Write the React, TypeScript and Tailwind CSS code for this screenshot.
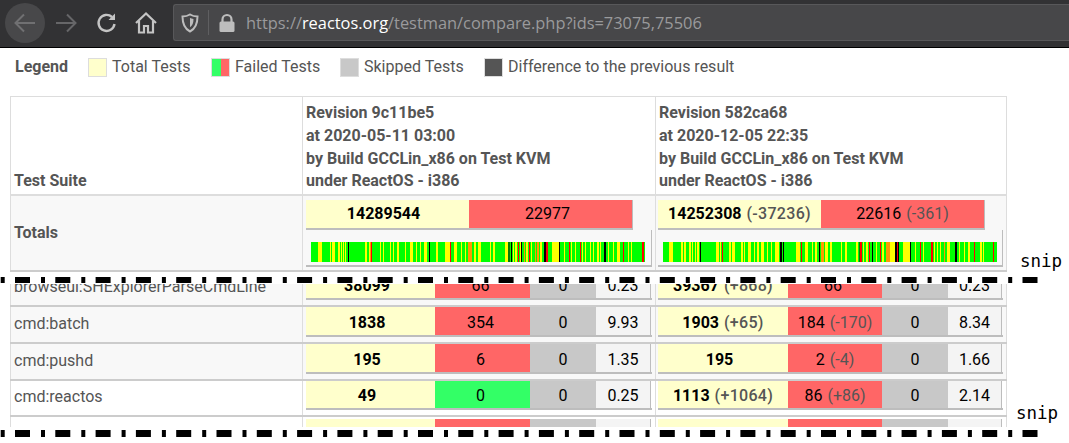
const Y = "#ffff00";
const R = "#ff0000";
const K = "#000000";
const O = "#ff9900";
const D = "#008000";

// [start, end, colour] in thirds of a pixel, measured from the start of the bar
type Stripe = [number, number, string];

const toStripes = (list: [number, number, string][], offset: number): Stripe[] =>
  list.map(([a, b, c]) => [a + offset, b + offset, c]);

const bar1: Stripe[] = [
  ...toStripes(
    [
      [30, 42, Y], [65, 70, Y], [73, 80, Y], [91, 96, Y], [99, 102, Y], [105, 108, Y], [112, 115, Y],
      [120, 123, K], [172, 178, Y], [182, 185, Y], [187, 190, O], [190, 193, R], [217, 220, Y],
      [225, 228, Y], [247, 250, Y], [256, 259, Y], [268, 274, Y], [292, 295, Y], [307, 316, Y],
      [325, 328, Y], [337, 340, Y], [349, 358, Y], [363, 366, K], [384, 390, Y], [412, 426, Y],
      [426, 429, R], [438, 447, Y], [459, 462, Y], [471, 474, Y], [480, 492, O], [498, 504, Y],
    ],
    -9,
  ),
  ...toStripes(
    [
      [0, 10, Y], [37, 40, Y], [46, 52, Y], [82, 90, Y], [91, 95, D], [99, 102, K], [104, 107, Y],
      [112, 118, Y], [121, 124, R], [127, 129, Y], [129, 132, K], [139, 142, O], [145, 151, Y],
      [154, 156, R], [160, 163, Y], [170, 175, O], [178, 184, O], [185, 193, Y], [198, 203, K],
      [203, 209, R], [222, 243, Y], [243, 246, K], [259, 262, Y], [272, 275, R], [280, 283, Y],
      [290, 295, Y], [306, 309, R], [312, 316, Y], [322, 325, Y], [335, 338, Y], [344, 347, Y],
      [356, 362, Y], [365, 370, Y], [378, 384, K], [389, 392, Y], [404, 407, Y], [416, 425, Y],
      [435, 438, R], [450, 453, Y], [459, 462, Y], [492, 498, R],
    ],
    501,
  ),
];

const bar2: Stripe[] = [
  ...toStripes(
    [
      [27, 39, Y], [62, 68, Y], [73, 79, Y], [88, 92, Y], [96, 100, Y], [105, 108, Y], [112, 116, Y],
      [120, 123, K], [169, 176, Y], [180, 184, Y], [185, 190, R], [208, 212, Y], [217, 224, Y],
      [244, 248, Y], [252, 256, Y], [265, 272, Y], [281, 284, Y], [292, 296, Y], [304, 313, Y],
      [322, 325, Y], [334, 337, Y], [346, 356, Y], [360, 365, K], [368, 372, K], [408, 420, Y],
      [423, 426, R], [436, 443, Y], [455, 458, Y], [466, 470, Y], [477, 480, K], [482, 492, O],
      [495, 504, Y],
    ],
    -9,
  ),
  ...toStripes(
    [
      [0, 6, Y], [33, 36, Y], [45, 50, Y], [78, 85, Y], [86, 90, D], [90, 96, R], [100, 102, Y],
      [108, 114, Y], [117, 120, R], [126, 129, K], [138, 141, Y], [150, 153, R], [156, 162, Y],
      [168, 180, O], [180, 195, Y], [195, 200, K], [200, 204, R], [204, 207, K], [218, 240, Y],
      [240, 243, K], [255, 258, Y], [270, 273, R], [279, 282, Y], [303, 310, R], [312, 315, Y],
      [321, 324, Y], [330, 333, Y], [342, 345, O], [351, 360, Y], [375, 381, K], [387, 390, Y],
      [402, 405, Y], [415, 420, Y], [432, 435, R], [450, 456, Y], [459, 462, Y], [489, 492, R],
    ],
    501,
  ),
];

const ResultBar = ({ stripes }: { stripes: Stripe[] }) => (
  <svg viewBox="0 0 1002 60" preserveAspectRatio="none" shapeRendering="crispEdges" className="block w-[334px] h-[20px]">
    <rect width="1002" height="60" fill="#00ff00" />
    {stripes.map(([a, b, c]) => (
      <rect key={a} x={a} y="0" width={b - a} height="60" fill={c} />
    ))}
  </svg>
);

const Diff = ({ children, strong }: { children: string; strong?: boolean }) => (
  <span className={`ml-[5px] text-[#555555] ${strong ? "font-medium tracking-[0.3px]" : "font-normal"}`}>{children}</span>
);

type Result = {
  total: string;
  totalDiff?: string;
  failed: string;
  failedDiff?: string;
  green?: boolean;
  skipped: string;
  time: string;
};

const ResultCells = ({ r, second }: { r: Result; second?: boolean }) => (
  <div className="flex h-[30px] border-b-2 border-[#bdbdbd] text-black">
    <div
      className={`${second ? "w-[130px]" : "w-[129px]"} ${r.totalDiff ? "" : "pr-[7px]"} flex items-center justify-center pt-[3px] bg-[#ffffcc] font-bold`}
    >
      {r.total}
      {r.totalDiff && <Diff strong>{r.totalDiff}</Diff>}
    </div>
    <div
      className={`${second ? "w-[94px]" : "w-[95px]"} ${r.green ? "bg-[#33ff66]" : "bg-[#ff6666]"} ${r.failedDiff ? "" : "pr-[4px]"} flex items-center justify-center pt-[3px]`}
    >
      {r.failed}
      {r.failedDiff && <Diff>{r.failedDiff}</Diff>}
    </div>
    <div className="w-[66px] flex items-center justify-center pt-[3px] bg-[#c8c8c8]">{r.skipped}</div>
    <div
      className={`${second ? "w-[54px]" : "w-[55px]"} flex items-center justify-center pt-[3px] bg-[#f4f4f4] border-r border-[#bdbdbd]`}
    >
      {r.time}
    </div>
  </div>
);

const Row = ({
  name,
  a,
  b,
  height,
  white,
  noBorder,
}: {
  name: string;
  a: Result;
  b: Result;
  height: string;
  white?: boolean;
  noBorder?: boolean;
}) => (
  <div
    className={`${height} ${white ? "bg-white" : "bg-[#f8f8f8]"} ${noBorder ? "items-start" : "items-end border-b-2 border-[#cccccc]"} ml-[10px] w-[997px] overflow-hidden flex`}
  >
    <div className="h-[37px] shrink-0 w-full grid grid-cols-[293px_353px_351px]">
      <div className="border-l border-r border-[#dddddd] pl-[3px] flex items-center text-[#555555]">{name}</div>
      <div className="border-r border-[#dddddd] pl-[3px] pr-[3px] pt-[2px]">
        <ResultCells r={a} />
      </div>
      <div className="border-r border-[#dddddd] pl-[2px] pr-[3px] pt-[2px]">
        <ResultCells r={b} second />
      </div>
    </div>
  </div>
);

const SnipLine = ({ className }: { className: string }) => (
  <svg className={`block w-[1069px] ${className}`} viewBox="0 0 1069 8" preserveAspectRatio="none">
    <line x1="-25.3" y1="4" x2="1037.5" y2="4" stroke="#000000" strokeWidth="8" strokeDasharray="15 11 4 10.3" />
  </svg>
);

const Swatch = ({ children }: { children?: React.ReactNode }) => (
  <div className="w-[19px] h-[19px] border border-[#dddddd] flex">{children}</div>
);

const Toolbar = () => (
  <div className="h-[48px] bg-[#323234] border-b border-black flex items-center pl-[5px] pb-[2px]">
    <div className="w-[40px] h-[40px] rounded-full bg-[#48484a] flex items-center justify-center">
      <svg width="24" height="24" viewBox="0 0 24 24" fill="none" stroke="#707072" strokeWidth="2">
        <path d="M22 12H3M11 3.500 2.500 12l8.500 8.500" />
      </svg>
    </div>
    <svg className="ml-[9px]" width="24" height="24" viewBox="0 0 24 24" fill="none" stroke="#666668" strokeWidth="2">
      <path d="M2 12h19M13 3.500 21.500 12 13 20.500" />
    </svg>
    <svg className="ml-[17px]" width="24" height="24" viewBox="0 0 24 24" fill="none" stroke="#c4c4c4" strokeWidth="2.400">
      <path d="M19.500 13a8 8 0 1 1-2.500-7" />
      <path d="M20 2.500V9h-6.500" fill="#c4c4c4" stroke="none" />
    </svg>
    <svg className="ml-[15px]" width="24" height="24" viewBox="0 0 24 24" fill="none" stroke="#c4c4c4" strokeWidth="2.200">
      <path d="M2 12 12 2.500 22 12" />
      <path d="M5 10v11.500h5V15h4v6.500h5V10" />
    </svg>
    <div className="ml-[15px] flex-1 h-[37px] bg-[#474749] border border-[#58585a] rounded-l-[3px] border-r-0 flex items-center pl-[7px]">
      <svg width="18" height="20" viewBox="0 0 18 20">
        <path d="M9 1.500c2.500 1.500 5 2 7.500 2 0 7-1.500 12-7.500 15-6-3-7.500-8-7.500-15 2.500 0 5-.5 7.500-2z" fill="none" stroke="#bdbdbd" strokeWidth="2" />
        <path d="M9 5c1 .5 2 .8 3.500 1 0 4-1 6.500-3.500 8.200z" fill="#bdbdbd" />
      </svg>
      <div className="ml-[9px] w-px h-[25px] bg-[#5f5f61]" />
      <svg className="ml-[9px]" width="18" height="20" viewBox="0 0 18 20">
        <path d="M4.500 9V6.500a4.500 4.500 0 0 1 9 0V9" fill="none" stroke="#bdbdbd" strokeWidth="2.200" />
        <rect x="1.500" y="8.500" width="15" height="10.500" rx="1.500" fill="#bdbdbd" />
      </svg>
      <div className="ml-[10px] pt-[2px] text-[16.4px] text-[#9a9a9c] font-['Open_Sans','Noto_Sans',sans-serif] whitespace-nowrap">
        https://<span className="text-white">reactos.org</span>/testman/compare.php?ids=73075,75506
      </div>
    </div>
  </div>
);

const Legend = () => (
  <div className="h-[48px] flex items-center pl-[15px] pb-[12px] pt-[2px] text-[#555555]">
    <div className="font-bold w-[73px]">Legend</div>
    <Swatch>
      <div className="flex-1 bg-[#ffffcc]" />
    </Swatch>
    <div className="ml-[5px] w-[99px]">Total Tests</div>
    <Swatch>
      <div className="flex-1 bg-[#33ff66]" />
      <div className="flex-1 bg-[#ff6666]" />
    </Swatch>
    <div className="ml-[5px] w-[105px]">Failed Tests</div>
    <Swatch>
      <div className="flex-1 bg-[#c8c8c8]" />
    </Swatch>
    <div className="ml-[5px] w-[120px]">Skipped Tests</div>
    <Swatch>
      <div className="flex-1 bg-[#555555]" />
    </Swatch>
    <div className="ml-[5px]">Difference to the previous result</div>
  </div>
);

const RevisionHeader = ({ hash, date }: { hash: string; date: string }) => (
  <div className="border-r border-[#dddddd] pl-[3px] pb-[1px] flex flex-col justify-end font-bold leading-[22.7px]">
    <div>Revision {hash}</div>
    <div>at {date}</div>
    <div>by Build GCCLin_x86 on Test KVM</div>
    <div>under ReactOS - i386</div>
  </div>
);

const Totals = ({ total, diff, failed, failedDiff, stripes, second }: {
  total: string;
  diff?: string;
  failed: string;
  failedDiff?: string;
  stripes: Stripe[];
  second?: boolean;
}) => (
  <div className={`border-r border-[#dddddd] pt-[4px] ${second ? "pl-[2px] pr-[3px]" : "pl-[3px] pr-[3px]"}`}>
    <div className="flex h-[30px] w-[327px] text-black">
      <div
        className={`${diff ? "" : "pr-[8px]"} w-[163px] flex items-center justify-center bg-[#ffffcc] font-bold border-b-2 border-[#bdbdbd]`}
      >
        {total}
        {diff && <Diff strong>{diff}</Diff>}
      </div>
      <div
        className={`${failedDiff ? "" : "pr-[6px]"} w-[164px] flex items-center justify-center bg-[#ff6666] border-b-2 border-r border-[#bdbdbd]`}
      >
        {failed}
        {failedDiff && <Diff>{failedDiff}</Diff>}
      </div>
    </div>
    <div className="h-[37px] pt-[12px] pl-[5px] border-r border-b-2 border-[#bdbdbd]">
      <ResultBar stripes={stripes} />
    </div>
  </div>
);

const App = () => {
  return (
    <div className="relative w-[1069px] h-[443px] overflow-hidden bg-white text-[16px] leading-normal font-['Roboto',sans-serif]">
      <Toolbar />
      <Legend />

      <div className="ml-[10px] w-[997px] h-[100px] border-t border-b-2 border-t-[#dddddd] border-b-[#dddddd] grid grid-cols-[293px_353px_351px] text-[#555555]">
        <div className="border-l border-r border-[#dddddd] pl-[3px] pb-[1px] flex items-end font-bold leading-[22.7px]">
          Test Suite
        </div>
        <RevisionHeader hash="9c11be5" date="2020-05-11 03:00" />
        <RevisionHeader hash="582ca68" date="2020-12-05 22:35" />
      </div>

      <div className="relative ml-[10px] w-[997px] h-[76px] bg-[#f8f8f8] border-b-2 border-[#cccccc] grid grid-cols-[293px_353px_351px]">
        <div className="border-l border-r border-[#dddddd] pl-[3px] flex items-center font-bold text-[#555555]">Totals</div>
        <Totals total="14289544" failed="22977" stripes={bar1} />
        <Totals total="14252308" diff="(-37236)" failed="22616" failedDiff="(-361)" stripes={bar2} second />
        <div className="absolute left-[1010px] top-[52px] text-[17.500px] text-black font-['DejaVu_Sans_Mono',monospace]">snip</div>
      </div>

      <div className="h-[12px] bg-white pt-[5px]">
        <SnipLine className="h-[6px]" />
      </div>

      <Row
        name="browseui:SHExplorerParseCmdLine"
        height="h-[23px]"
        a={{ total: "38099", failed: "66", skipped: "0", time: "0.23" }}
        b={{ total: "39367", totalDiff: "(+868)", failed: "66", skipped: "0", time: "0.23" }}
      />
      <Row
        name="cmd:batch"
        height="h-[37px]"
        a={{ total: "1838", failed: "354", skipped: "0", time: "9.93" }}
        b={{ total: "1903", totalDiff: "(+65)", failed: "184", failedDiff: "(-170)", skipped: "0", time: "8.34" }}
      />
      <Row
        name="cmd:pushd"
        height="h-[37px]"
        a={{ total: "195", failed: "6", skipped: "0", time: "1.35" }}
        b={{ total: "195", failed: "2", failedDiff: "(-4)", skipped: "0", time: "1.66" }}
      />
      <Row
        name="cmd:reactos"
        height="h-[36px]"
        white
        a={{ total: "49", failed: "0", green: true, skipped: "0", time: "0.25" }}
        b={{ total: "1113", totalDiff: "(+1064)", failed: "86", failedDiff: "(+86)", skipped: "0", time: "2.14" }}
      />
      <Row
        name=""
        height="h-[10px]"
        white
        noBorder
        a={{ total: "", failed: "", skipped: "", time: "" }}
        b={{ total: "", failed: "", skipped: "", time: "" }}
      />

      <div className="h-[16px] bg-white pt-[3px]">
        <SnipLine className="h-[7px]" />
      </div>

      <div className="absolute left-[1016px] top-[400px] text-[17.500px] text-black font-['DejaVu_Sans_Mono',monospace]">snip</div>
    </div>
  );
};

export default App;
